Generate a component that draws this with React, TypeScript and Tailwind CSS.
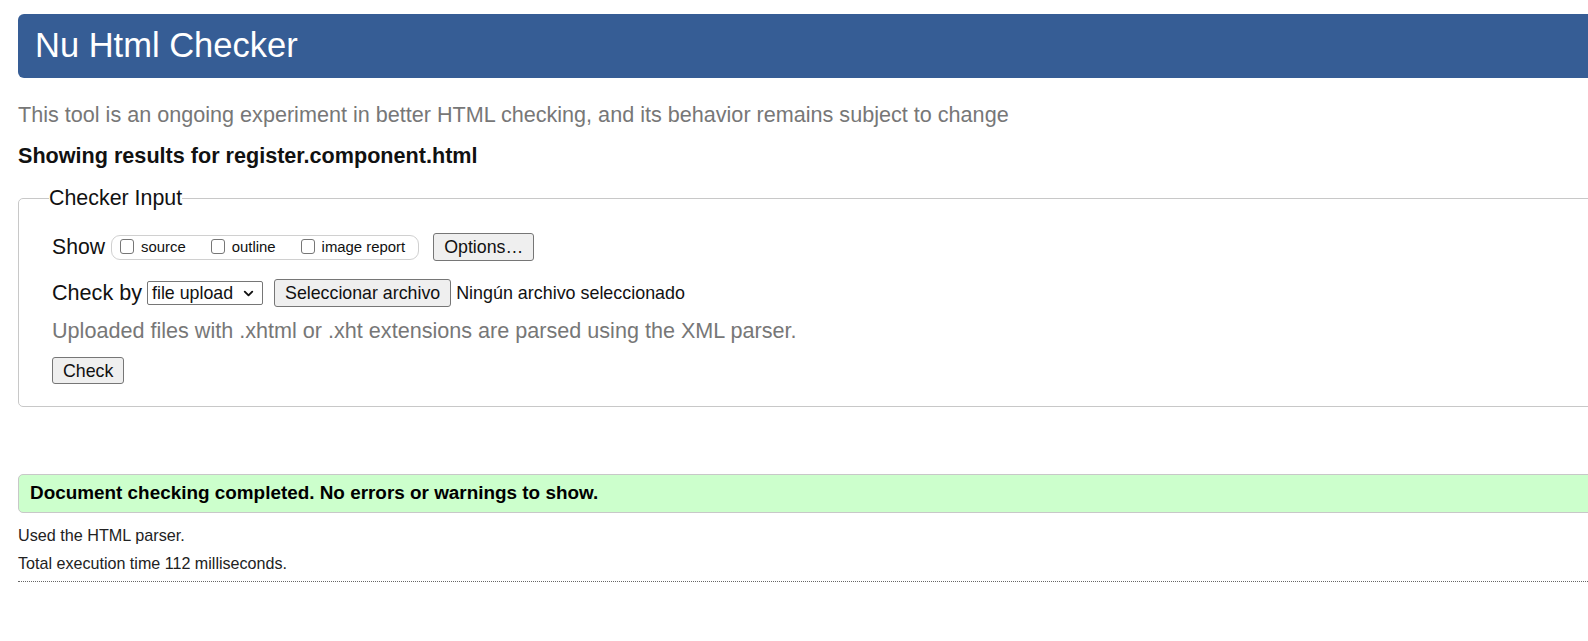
import { ChevronDown } from 'lucide-react';

function Box({ label, className = '' }: { label: string; className?: string }) {
  return (
    <label className={`flex items-center ${className}`}>
      <input
        type="checkbox"
        className="appearance-none w-[14px] h-[15px] border border-[#767676] rounded-[3px] bg-white mr-[7px]"
      />
      <span className="text-[14.9px] text-[#111]">{label}</span>
    </label>
  );
}

export default function App() {
  return (
    <div className="min-h-screen bg-white overflow-hidden font-['Liberation_Sans',Arial,sans-serif] text-[#111]">
      <div className="ml-[18px] w-[1600px]">
        <h1 className="mt-[14px] h-[64px] bg-[#365d95] rounded-l-[6px] text-white text-[34.5px] pl-[17px] flex items-center">
          Nu Html Checker
        </h1>

        <p className="mt-[25px] text-[21.6px] leading-[24px] text-[#777]">
          This tool is an ongoing experiment in better HTML checking, and its behavior remains subject to change
        </p>

        <p className="mt-[17px] text-[21.6px] leading-[24px] font-bold text-[#111]">
          Showing results for register.component.html
        </p>

        <fieldset className="mt-[18px] border border-[#c8c8c8] rounded-l-[5px] px-[30px] pb-[22px]">
          <legend className="text-[21.4px] leading-[24px] text-[#111]">Checker Input</legend>

          <div className="pl-[3px]">
            <div className="mt-[23px] h-[28px] flex items-center">
              <span className="text-[21.2px] mr-[6px]">Show</span>
              <div className="h-[25px] flex items-center border border-[#d0d0d0] rounded-[9px] pl-[8px] pr-[13px]">
                <Box label="source" className="mr-[25px]" />
                <Box label="outline" className="mr-[25px]" />
                <Box label="image report" />
              </div>
              <button className="ml-[14px] h-[28px] px-[10px] bg-[#efefef] border border-[#767676] rounded-[3px] text-[17.8px] text-[#111]">
                Options…
              </button>
            </div>

            <div className="mt-[18px] h-[28px] flex items-center">
              <span className="text-[21.6px] mr-[5px]">Check by</span>
              <div className="h-[24px] w-[116px] flex items-center justify-between border border-[#767676] rounded-[2px] pl-[4px] pr-[6px] text-[17.8px]">
                <span>file upload</span>
                <ChevronDown className="w-[15px] h-[15px]" strokeWidth={3} />
              </div>
              <button className="ml-[11px] h-[28px] px-[10px] bg-[#efefef] border border-[#767676] rounded-[3px] text-[17.8px] text-[#111]">
                Seleccionar archivo
              </button>
              <span className="ml-[5px] text-[17.9px]">Ningún archivo seleccionado</span>
            </div>

            <p className="mt-[12px] text-[21.6px] leading-[24px] text-[#777]">
              Uploaded files with .xhtml or .xht extensions are parsed using the XML parser.
            </p>

            <button className="mt-[14px] h-[27px] px-[10px] bg-[#efefef] border border-[#767676] rounded-[3px] text-[17.8px] text-[#111]">
              Check
            </button>
          </div>
        </fieldset>

        <div className="mt-[67px] h-[39px] flex items-center bg-[#ccffcc] border border-[#c8c8c8] rounded-l-[5px] pl-[11px]">
          <span className="text-[18.9px] font-bold text-black">
            Document checking completed. No errors or warnings to show.
          </span>
        </div>

        <p className="mt-[13px] text-[16.2px] leading-[18px] text-[#222]">Used the HTML parser.</p>
        <p className="mt-[10px] text-[16.1px] leading-[18px] text-[#222]">Total execution time 112 milliseconds.</p>
        <div className="mt-[9px] border-t border-dotted border-[#666]" />
      </div>
    </div>
  );
}
